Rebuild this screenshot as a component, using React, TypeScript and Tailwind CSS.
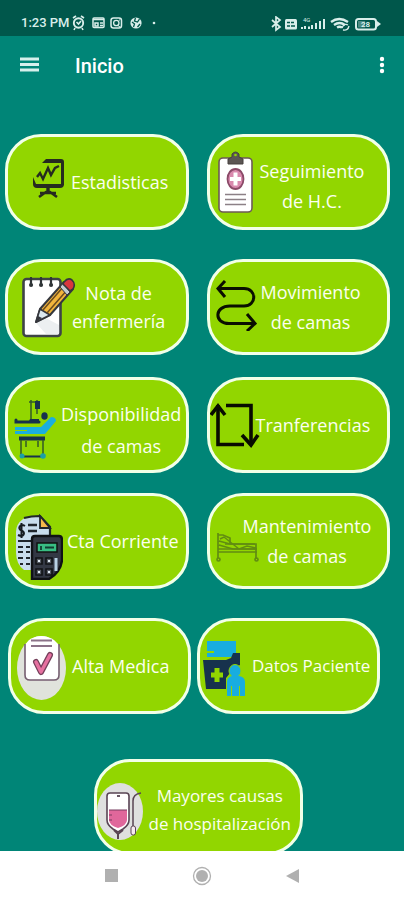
import type { ReactNode } from "react";
import { clsx } from "clsx";

function ChartIcon() {
  return (
    <svg width="33" height="41" viewBox="0 0 33 41" fill="none" aria-hidden="true">
      <path d="M10 5 14 1H29Q32 1 32 4V27H29V5Z" fill="#262b20" />
      <path d="M1 19V26Q1 30 5 30H28Q32 30 32 26H4Z" fill="#262b20" />
      <path d="M5 19 8 15 11 21 16 10 19 17 23 10 27 8" stroke="#262b20" strokeWidth="2.4" />
      <path d="M16 29V34" stroke="#262b20" strokeWidth="3.4" />
      <path d="M7 39 14 34H18L25 39M8 35H24" stroke="#262b20" strokeWidth="2.6" />
    </svg>
  );
}

function ClipboardIcon() {
  return (
    <svg width="36" height="62" viewBox="0 0 36 62" fill="none" aria-hidden="true">
      <rect x="1" y="7" width="33" height="54" rx="4" fill="#fff" stroke="#6d5a55" strokeWidth="1.6" />
      <path d="M10 13V8L14 6V3Q17.500-1 21 3V6L25 8V13Z" fill="#5b5553" stroke="#46403f" />
      <circle cx="17.500" cy="4" r="1.300" fill="#92d600" />
      <ellipse cx="17.500" cy="28" rx="8" ry="10" fill="#d98aae" stroke="#8b4a68" strokeWidth="1.800" />
      <path d="M17.500 21.500V34.500M12 28H23" stroke="#fff" strokeWidth="4" />
      <path d="M7 43.500H28M7 48.500H28M7 53.500H28" stroke="#8c8086" strokeWidth="1.700" />
    </svg>
  );
}

function NotebookIcon() {
  return (
    <svg width="54" height="61" viewBox="0 0 54 61" fill="none" aria-hidden="true">
      <rect x="1.500" y="2" width="37" height="57" rx="3" fill="#fff" stroke="#3e4347" strokeWidth="2.600" />
      <path d="M14 46 20 39 37 48V57H24Z" fill="#eceff1" />
      <path d="M9 1V8M19 1V8M29 1V8" stroke="#2f3437" strokeWidth="2.200" strokeLinecap="round" />
      <path d="M9 8H9.100M19 8H19.100M29 8H29.100" stroke="#2f3437" strokeWidth="4" strokeLinecap="round" />
      <path d="M14 45 18 32 42 5 51 12 28 38Z" fill="#f2b53c" stroke="#35373d" strokeWidth="2" strokeLinejoin="round" />
      <path d="M14 45 18 32 28 38Z" fill="#dbe8ef" stroke="#35373d" strokeWidth="1.600" strokeLinejoin="round" />
      <path d="M14 45 16 39 20 41Z" fill="#35373d" />
      <path d="M21 33 42 9M25 36 46 12" stroke="#6b4b20" strokeWidth="1.500" />
      <path d="M38 10 41 6 48 15 45 18Z" fill="#c4cdd2" stroke="#35373d" />
      <path d="M42 5Q46 0 50 3 54 7 51 12L48 14 41 7Z" fill="#d9363e" stroke="#35373d" strokeWidth="1.600" />
    </svg>
  );
}

function RouteIcon() {
  return (
    <svg width="41" height="51" viewBox="0 0 41 51" fill="none" stroke="#0a0f00" strokeWidth="3" aria-hidden="true">
      <path d="M2 8.500H28C41 8.500 41 26 28 26H14C-2 26-2 43.500 13 43.500H38" />
      <path d="M9 1 2 8.500 9 17M31 34 39 43.500 31 51" />
    </svg>
  );
}

function StretcherIcon() {
  return (
    <svg width="43" height="61" viewBox="0 0 43 61" fill="none" aria-hidden="true">
      <path d="M17 1V22M23 1V15M15 3H26" stroke="#335a27" strokeWidth="1.500" />
      <rect x="21" y="2" width="5" height="8" fill="#17324d" />
      <path d="M2 21V23H25" stroke="#17324d" strokeWidth="3" strokeLinecap="round" />
      <path d="M16 20H25V24H14Z" fill="#17324d" />
      <ellipse cx="30.500" cy="17" rx="3.200" ry="3.800" fill="#17324d" />
      <path d="M1 28H27L37 18Q42 18 42 22L31 35H1Z" fill="#1aaee0" />
      <path d="M1 31.500H13" stroke="#92d600" strokeWidth="1" />
      <path d="M5 39.500H31" stroke="#17324d" strokeWidth="4" />
      <path d="M7 41V56M12 42V48M29 41V56M24 42V48" stroke="#335a27" strokeWidth="1.500" />
      <path d="M10 57.500H27" stroke="#17324d" strokeWidth="2" />
      <circle cx="8" cy="57" r="2.500" fill="#1b9fa8" />
      <circle cx="29" cy="57" r="2.800" fill="#1b9fa8" />
    </svg>
  );
}

function TransferIcon() {
  return (
    <svg width="50" height="46" viewBox="0 0 50 46" fill="none" stroke="#080c00" strokeWidth="3.600" aria-hidden="true">
      <path d="M16 3.500H41V42M34 42.500H8V3" />
      <path d="M1 13 8 4 15 13M32 33 41 43 48 33" />
    </svg>
  );
}

function CalculatorIcon() {
  return (
    <svg width="49" height="66" viewBox="0 0 49 66" fill="none" aria-hidden="true">
      <path d="M9 5Q16 2 26 2L36 13V56H10Q2 50 2 38V18Q2 10 9 5Z" fill="#c9dded" />
      <path d="M10 4Q17 2 26 2L36 13V24" stroke="#20262c" strokeWidth="2.200" />
      <path d="M26 2V14H36Z" fill="#f5b94b" stroke="#20262c" strokeWidth="1.800" />
      <path d="M14 11H23M14 17H23" stroke="#20262c" strokeWidth="2.400" />
      <path d="M11 12C6 9 3 15 7.500 16.500S10 24 4 21M7.500 9V24" stroke="#161b20" strokeWidth="2" />
      <path d="M4 27H17M4 33H9M12 33H16M4 38H9M12 38H16M4 44H9M12 44H16M6 50H9M12 50H16" stroke="#20262c" strokeWidth="2.200" />
      <path d="M18 25Q18 22 21 22H45Q48 22 48 26V46Q47 58 35 65H18Z" fill="#333844" stroke="#101215" strokeWidth="2.400" />
      <rect x="23" y="29" width="20" height="9" fill="#38bd83" stroke="#111" strokeWidth="1.500" />
      <path d="M27 32V36M31 33.500H40" stroke="#123d31" strokeWidth="1.800" />
      <path d="M22 44H28V50H22ZM32 44H38V50H32ZM22 55H28V61H22ZM32 55H38V61H32Z" fill="#555b64" stroke="#101215" strokeWidth="1.600" />
      <path d="M25 46V48M35 46V48M25 57V59M35 57V59" stroke="#dfe9f1" strokeWidth="2" />
      <path d="M42 44V57" stroke="#b8d1e5" strokeWidth="3" />
    </svg>
  );
}

function BedIcon() {
  return (
    <svg width="43" height="30" viewBox="0 0 43 30" fill="none" stroke="#618c12" strokeWidth="1.700" aria-hidden="true">
      <path d="M2 1V26M2 3H7L14 6V11M3 9 14 12H40V27M3 13 17 17H41M2 20H41" />
      <path d="M4 7 8 5 23 17 31 14 40 16M9 12H39M2 17H41" strokeWidth="1.400" />
      <circle cx="2.500" cy="27.500" r="1.500" />
      <circle cx="40.500" cy="27.500" r="1.500" />
    </svg>
  );
}

function CheckSheetIcon() {
  return (
    <svg width="49" height="64" viewBox="0 0 49 64" fill="none" aria-hidden="true">
      <ellipse cx="24.500" cy="32" rx="24.500" ry="32" fill="#e0e3dc" />
      <path d="M12 4Q24-4 37 4L42 9V39Q42 44 37 44H13Q8 44 8 39V9Z" fill="#fff" />
      <path d="M8 8V39Q8 44 13 44H37Q42 44 42 39V8" stroke="#765e70" strokeWidth="1.600" />
      <path d="M14 4.500H35M14 10H35" stroke="#8b7288" strokeWidth="1.800" />
      <path d="M19 26 24 36 33 19" stroke="#743f5a" strokeWidth="6" strokeLinecap="round" strokeLinejoin="round" />
      <path d="M19 26 24 36 33 19" stroke="#e671a0" strokeWidth="3.500" strokeLinecap="round" strokeLinejoin="round" />
    </svg>
  );
}

function PatientFolderIcon() {
  return (
    <svg width="43" height="56" viewBox="0 0 43 56" fill="none" aria-hidden="true">
      <path d="M4 1H33V14L28 17H4V13H11V11H4Z" fill="#18ade0" />
      <path d="M0 20H23L28 18 30 13H37V25L32 27 23 38V49H3Z" fill="#17324d" />
      <path d="M14 28V42M8 35H20" stroke="#92d600" strokeWidth="5" />
      <ellipse cx="32" cy="31" rx="6" ry="6.500" fill="#18ade0" stroke="#92d600" />
      <path d="M24 56V42Q24 37 29 36H36Q42 37 42 42V56H37V46H36V56H29V46H28V56Z" fill="#18ade0" />
    </svg>
  );
}

function BloodBagIcon() {
  return (
    <svg width="46" height="57" viewBox="0 0 46 57" fill="none" aria-hidden="true">
      <ellipse cx="23" cy="28.500" rx="23" ry="28.500" fill="#dfe0df" />
      <path d="M10 13Q10 10 13 10H29Q32 10 32 13V37Q32 42 26 46L21 49 16 46Q10 42 10 37Z" fill="#fff" stroke="#594454" strokeWidth="1.600" />
      <path d="M12 27H30V37Q30 42 21 45 12 42 12 37Z" fill="#e0679b" />
      <path d="M12 27H30M12 32H15M12 37H15" stroke="#793d61" strokeWidth="1.200" />
      <path d="M20 13H23" stroke="#594454" strokeWidth="1.800" />
      <path d="M17 47 21 51 26 47M21 50V56" stroke="#594454" strokeWidth="2" />
      <path d="M44 10Q36 11 36 18V43" stroke="#594454" strokeWidth="1.500" />
      <rect x="34" y="43" width="4.500" height="9" rx="2" fill="#f6eaf0" stroke="#594454" />
    </svg>
  );
}

type TileProps = {
  icon: ReactNode;
  lines: string[];
  className?: string;
  iconClass?: string;
  textClass?: string;
};

function Tile({ icon, lines, className, iconClass, textClass }: TileProps) {
  return (
    <button
      type="button"
      className={clsx(
        "flex h-24 min-w-0 items-center rounded-[36px] border-[3px] border-[#f2ffe8] bg-[#92d600] text-[#fbfff0]",
        className
      )}
    >
      <span className={clsx("shrink-0", iconClass)}>{icon}</span>
      <span className={clsx("whitespace-nowrap text-center", textClass)}>
        {lines.map((line) => (
          <span key={line} className="block">
            {line}
          </span>
        ))}
      </span>
    </button>
  );
}

function StatusBar() {
  return (
    <div className="flex h-9 shrink-0 items-end justify-between bg-[#00574b] pr-[22px] pb-1 pl-[21px] font-['Roboto',sans-serif] text-[#d9eeea]">
      <div className="flex items-center gap-0.5">
        <span className="text-[13px] leading-[18px] font-medium whitespace-nowrap">1:23 PM</span>
        <svg width="84" height="16" viewBox="0 0 84 16" fill="none" stroke="currentColor" aria-hidden="true">
          <circle cx="6.500" cy="8" r="4.700" strokeWidth="1.900" />
          <path d="M1 3 4 1M9 1 12 3M3 13 2 15M10 13 11 15M4.500 7 6.500 9 9 6" strokeWidth="1.600" />
          <rect x="21" y="3" width="11" height="9.500" rx="1" strokeWidth="1.500" />
          <path d="M21 4.500H32M23 8H26V11H23ZM28 8H31M28 10.500H31" strokeWidth="1.500" />
          <rect x="39" y="3" width="10.500" height="10" rx="2.500" strokeWidth="1.500" />
          <circle cx="44.300" cy="8" r="2.700" strokeWidth="1.300" />
          <path d="M45 10 48 12M47 5H48" />
          <circle cx="64" cy="8" r="5.600" fill="currentColor" stroke="none" />
          <path d="M60 7 62.500 9 61.500 12M63.500 3 62.500 6 65.500 7 67.500 4M65.500 12 68 9" stroke="#00574b" strokeWidth="1.300" />
          <circle cx="82" cy="8" r="1.300" fill="currentColor" stroke="none" />
        </svg>
      </div>
      <div className="flex items-center">
        <svg width="111" height="16" viewBox="0 0 111 16" fill="none" stroke="currentColor" aria-hidden="true">
          <path d="M1 4 9 11 5 14V1L9 4 1 11" strokeWidth="1.700" />
          <rect x="14" y="3" width="12" height="10.500" rx="1.500" fill="currentColor" stroke="none" />
          <path d="M16 6.500H19M20 6.500H23M16 10H19M20 10H24" stroke="#00574b" strokeWidth="1.300" />
          <path d="M31 13V11M34 13V10M38 13V10.500M41 13V9M45 13V7M49 13V5M53 13V3" strokeWidth="2" />
          <text x="32" y="6" fontSize="6" fill="currentColor" stroke="none">4G</text>
          <path d="M60 6Q68 0 77 6M63 9Q68.500 5 74 9M66 11.500Q68.500 10 71 11.500" strokeWidth="2.300" />
          <path d="M71 12Q73 7 77 9M72 14Q77 15 78 10" strokeWidth="1.300" />
          <rect x="85" y="3" width="20" height="10.500" rx="2.500" strokeWidth="2" />
          <path d="M106 5 110 8 106 11Z" fill="currentColor" stroke="none" />
          <rect x="87" y="5" width="7" height="6.500" fill="currentColor" stroke="none" opacity=".35" />
          <text x="90" y="11" fontSize="8" fontWeight="700" fill="currentColor" stroke="none">28</text>
        </svg>
      </div>
    </div>
  );
}

function AppBar() {
  return (
    <header className="flex h-[58px] shrink-0 items-center bg-[#008577] pr-3 pl-5 font-['Roboto',sans-serif] text-white">
      <button type="button" aria-label="Abrir menú">
        <svg width="20" height="16" viewBox="0 0 20 16" aria-hidden="true">
          <path d="M0 2H19M0 7.500H19M0 13H19" stroke="#d5f0ec" strokeWidth="3" />
        </svg>
      </button>
      <h1 className="ml-[35px] flex-1 pt-0.5 text-xl leading-6 font-medium">Inicio</h1>
      <button type="button" aria-label="Más opciones" className="flex w-5 justify-center">
        <svg width="6" height="18" viewBox="0 0 6 18" fill="#fff" aria-hidden="true">
          <circle cx="3" cy="3" r="2.200" />
          <circle cx="3" cy="9" r="2.200" />
          <circle cx="3" cy="15" r="2.200" />
        </svg>
      </button>
    </header>
  );
}

export default function App() {
  return (
    <div className="flex h-screen flex-col overflow-hidden bg-[#008577]">
      <StatusBar />
      <AppBar />

      <main className="min-h-0 flex-1 overflow-hidden pt-10 font-['Open_Sans',sans-serif] text-lg">
        <div className="grid grid-cols-2 gap-x-[18px] pr-[14px] pl-[5px]">
          <Tile icon={<ChartIcon />} lines={["Estadisticas"]} className="pl-6" iconClass="-mt-2" textClass="ml-1.5" />
          <Tile icon={<ClipboardIcon />} lines={["Seguimiento", "de H.C."]} className="pl-2" textClass="ml-1.5 mt-2 leading-[30px]" />
        </div>
        <div className="mt-[29px] grid grid-cols-2 gap-x-[18px] pr-[14px] pl-[5px]">
          <Tile icon={<NotebookIcon />} lines={["Nota de", "enfermería"]} className="pl-[14px]" textClass="-ml-1 leading-7" />
          <Tile icon={<RouteIcon />} lines={["Movimiento", "de camas"]} className="pl-1.5" iconClass="-mt-1" textClass="ml-1 leading-[30px]" />
        </div>
        <div className="mt-[22px] grid grid-cols-2 gap-x-[18px] pr-[14px] pl-[5px]">
          <Tile icon={<StretcherIcon />} lines={["Disponibilidad", "de camas"]} className="pl-1.5" iconClass="mt-2" textClass="ml-1 mt-2.5 leading-8" />
          <Tile icon={<TransferIcon />} lines={["Tranferencias"]} textClass="-ml-1" />
        </div>
        <div className="mt-5 grid grid-cols-2 gap-x-[18px] pr-[14px] pl-[5px]">
          <Tile icon={<CalculatorIcon />} lines={["Cta Corriente"]} className="pl-1.5" iconClass="mt-3" textClass="ml-1" />
          <Tile icon={<BedIcon />} lines={["Mantenimiento", "de camas"]} className="pl-1.5" iconClass="mt-3" textClass="-ml-4 leading-[30px]" />
        </div>
        <div className="mt-[29px] grid grid-cols-2 gap-x-1.5 pr-6 pl-2">
          <Tile icon={<CheckSheetIcon />} lines={["Alta Medica"]} className="pl-1.5" iconClass="mt-1" textClass="ml-1.5" />
          <Tile icon={<PatientFolderIcon />} lines={["Datos Paciente"]} className="pl-[3px]" iconClass="mt-1" textClass="ml-1.5 text-[17px]" />
        </div>
        <div className="mt-[45px] flex justify-center pr-2">
          <Tile icon={<BloodBagIcon />} lines={["Mayores causas", "de hospitalización"]} className="w-[209px]" iconClass="mt-2" textClass="ml-1.5 mt-1.5 text-[17px] leading-7" />
        </div>
      </main>

      <nav aria-label="Sistema" className="grid h-[49px] shrink-0 grid-cols-[1fr_92px_1fr] items-center bg-white text-[#b0b0b0]">
        <button type="button" aria-label="Recientes" className="mr-[38px] justify-self-end">
          <svg width="13" height="13" viewBox="0 0 13 13" fill="currentColor" aria-hidden="true">
            <rect width="13" height="13" />
          </svg>
        </button>
        <button type="button" aria-label="Inicio" className="justify-self-center">
          <svg width="20" height="20" viewBox="0 0 20 20" aria-hidden="true">
            <circle cx="10" cy="10" r="8.500" fill="none" stroke="currentColor" strokeWidth="1.300" />
            <circle cx="10" cy="10" r="6" fill="currentColor" />
          </svg>
        </button>
        <button type="button" aria-label="Atrás" className="ml-[38px] justify-self-start">
          <svg width="13" height="14" viewBox="0 0 13 14" fill="currentColor" aria-hidden="true">
            <path d="M13 0V14L0 7Z" />
          </svg>
        </button>
      </nav>
    </div>
  );
}
